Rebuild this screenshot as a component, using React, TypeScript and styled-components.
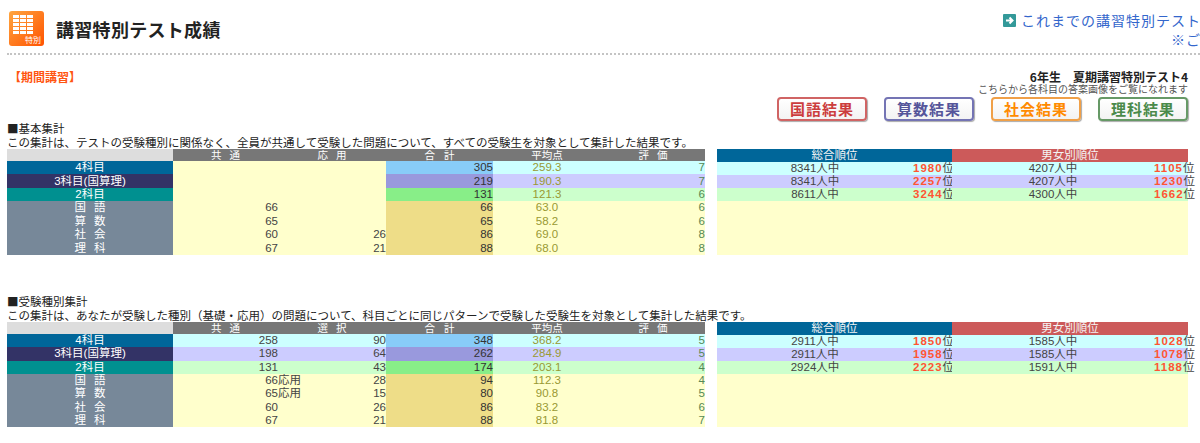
import React from "react";
import styled, { createGlobalStyle } from "styled-components";

const GlobalStyle = createGlobalStyle`
  body {
    margin: 0;
    overflow: hidden;
    background: #fff;
    font-family: "Noto Sans CJK JP", "Noto Sans", sans-serif;
    color: #333;
  }
`;

const tableFont = `"Liberation Sans", "Noto Sans CJK JP", sans-serif`;

type Kind = "k4" | "k3" | "k2" | "sub";

const palette: Record<Kind, { label: string; bg: string; total: string }> = {
  k4: { label: "#006699", bg: "#ccffff", total: "#88ccf8" },
  k3: { label: "#333366", bg: "#ccccff", total: "#9999dd" },
  k2: { label: "#009090", bg: "#ccffcc", total: "#88ee88" },
  sub: { label: "#778899", bg: "#ffffcc", total: "#eedd88" },
};

const Page = styled.div`
  padding: 0 12px 0 7px;
`;

const Header = styled.div`
  display: flex;
  align-items: flex-start;
  height: 42px;
  padding-top: 11px;
`;

const TitleBox = styled.div`
  display: flex;
  align-items: center;
  gap: 12px;
  padding-left: 2px;
`;

const Title = styled.h1`
  margin: 0;
  font-size: 18px;
  font-weight: bold;
  color: #222;
  letter-spacing: 0.3px;
`;

const HeaderLinks = styled.div`
  margin-left: auto;
  margin-right: -73px;
  display: flex;
  flex-direction: column;
  align-items: flex-end;
  white-space: nowrap;
  font-size: 14px;
  line-height: 19px;
  letter-spacing: 1px;
  color: #3366cc;
`;

const LinkLine = styled.a`
  display: flex;
  align-items: center;
  gap: 5px;
  color: #3366cc;
  text-decoration: none;
`;

const DashedRule = styled.div`
  border-top: 2px dotted #c4c4c4;
  margin-right: -12px;
`;

const InfoRow = styled.div`
  display: flex;
  justify-content: space-between;
  align-items: flex-start;
  margin-top: 15px;
  padding-left: 2px;
`;

const Term = styled.div`
  font-size: 12px;
  line-height: 13px;
  font-weight: bold;
  color: #ff5511;
`;

const TestInfo = styled.div`
  display: flex;
  flex-direction: column;
  align-items: flex-end;
`;

const TestName = styled.div`
  font-size: 12px;
  line-height: 13px;
  font-weight: bold;
  color: #222;
  white-space: pre;
`;

const Note = styled.div`
  font-size: 10px;
  line-height: 12px;
  color: #555;
`;

const ButtonRow = styled.div`
  display: flex;
  justify-content: flex-end;
  gap: 17px;
  margin-top: 2px;
`;

const ResultButton = styled.button<{ $color: string; $text: string }>`
  width: 90px;
  height: 24px;
  padding: 0;
  border: 2px solid ${(p) => p.$color};
  border-radius: 4px;
  background: linear-gradient(#ffffff, #f3f3f3);
  box-shadow: 1px 1px 1px #aaa;
  font-family: "Noto Sans CJK JP", sans-serif;
  font-size: 15px;
  font-weight: bold;
  line-height: 18px;
  letter-spacing: 1px;
  color: ${(p) => p.$text};
  cursor: pointer;
`;

const Section = styled.section<{ $gap: number }>`
  margin-top: ${(p) => p.$gap}px;
`;

const SectionTitle = styled.div`
  font-size: 11.5px;
  line-height: 14px;
  color: #222;
`;

const Desc = styled.div`
  font-size: 11.5px;
  line-height: 14px;
  color: #222;
  white-space: nowrap;
`;

const TableRow = styled.div`
  display: flex;
  align-items: stretch;
  gap: 12px;
`;

const ScoreTable = styled.table`
  width: 698px;
  table-layout: fixed;
  border-collapse: collapse;
  border-spacing: 0;
  font-family: ${tableFont};
  font-size: 11.5px;
`;

const HeadCell = styled.th<{ $blank?: boolean }>`
  height: 12px;
  padding: 0;
  font-size: 10.5px;
  line-height: 12px;
  font-weight: normal;
  color: #fff;
  background: ${(p) => (p.$blank ? "#dddddd" : "#777777")};
  text-align: center;
`;

const Spaced = styled.span<{ $gap: number }>`
  letter-spacing: ${(p) => p.$gap}px;
  padding-left: ${(p) => p.$gap}px;
`;

const DataRow = styled.tr`
  height: 13.4px;
`;

const LabelCell = styled.td<{ $kind: Kind }>`
  padding: 0;
  line-height: 13px;
  text-align: center;
  color: #fff;
  background: ${(p) => palette[p.$kind].label};
`;

const NumCell = styled.td<{ $bg: string; $color?: string; $align?: string }>`
  padding: 0;
  line-height: 13px;
  text-align: ${(p) => p.$align ?? "right"};
  background: ${(p) => p.$bg};
  color: ${(p) => p.$color ?? "#444"};
`;

const SplitValue = styled.div`
  display: flex;
  justify-content: space-between;
`;

const RankPanel = styled.div`
  width: 471px;
  display: grid;
  grid-template-columns: 196px 39px 202px 34px;
  grid-template-rows: 13px 13px 13px 13px 1fr;
  font-family: ${tableFont};
  font-size: 11.5px;
`;

const RankHead = styled.div<{ $bg: string }>`
  grid-column: span 2;
  background: ${(p) => p.$bg};
  color: #f4f4f4;
  text-align: center;
  font-size: 11.5px;
  line-height: 13px;
`;

const RankCount = styled.div<{ $bg: string }>`
  background: ${(p) => p.$bg};
  text-align: center;
  line-height: 13px;
  color: #444;
`;

const RankPlace = styled.div<{ $bg: string }>`
  background: ${(p) => p.$bg};
  text-align: right;
  line-height: 13px;
  white-space: nowrap;
  color: #444;
`;

const RankNum = styled.span`
  color: #ff5533;
  font-weight: bold;
  letter-spacing: 1px;
`;

const RankFiller = styled.div`
  grid-column: 1 / -1;
  background: #ffffcc;
`;

const Logo = () => (
  <svg width="35" height="35" viewBox="0 0 35 35">
    <defs>
      <linearGradient id="lg" x1="0" y1="0" x2="1" y2="1">
        <stop offset="0" stopColor="#ffa640" />
        <stop offset="1" stopColor="#ff5200" />
      </linearGradient>
    </defs>
    <rect x="0" y="0" width="35" height="35" rx="3" fill="url(#lg)" />
    {[0, 1, 2, 3, 4].map((r) =>
      [0, 1, 2].map((c) => (
        <rect
          key={`${r}-${c}`}
          x={4 + c * 7}
          y={4 + r * 4}
          width="6"
          height="3"
          fill="#fff"
        />
      ))
    )}
    <text x="32" y="32" fontSize="8" fill="#fff" textAnchor="end" fontFamily="Noto Sans CJK JP">
      特別
    </text>
  </svg>
);

const ArrowIcon = () => (
  <svg width="13" height="13" viewBox="0 0 13 13">
    <rect width="13" height="13" rx="1" fill="#339999" />
    <path d="M3 6.5h6M6.5 3.5l3 3-3 3" stroke="#fff" strokeWidth="2" fill="none" />
  </svg>
);

type ScoreRow = {
  kind: Kind;
  label: string;
  common: string;
  mark?: string;
  extra: string;
  total: string;
  avg: string;
  grade: string;
};

type RankRow = { kind: Kind; n1: string; r1: string; n2: string; r2: string };

const subjectLabel = (label: string) =>
  label.length === 2 ? <Spaced $gap={8}>{label}</Spaced> : label;

const Scores = ({
  rows,
  extraHead,
  plainTop,
}: {
  rows: ScoreRow[];
  extraHead: string;
  plainTop?: boolean;
}) => (
  <ScoreTable>
    <colgroup>
      <col style={{ width: 166 }} />
      <col style={{ width: 105 }} />
      <col style={{ width: 108 }} />
      <col style={{ width: 107 }} />
      <col style={{ width: 108 }} />
      <col style={{ width: 104 }} />
    </colgroup>
    <thead>
      <tr>
        <HeadCell $blank />
        <HeadCell><Spaced $gap={8}>共通</Spaced></HeadCell>
        <HeadCell><Spaced $gap={8}>{extraHead}</Spaced></HeadCell>
        <HeadCell><Spaced $gap={9}>合計</Spaced></HeadCell>
        <HeadCell>平均点</HeadCell>
        <HeadCell><Spaced $gap={8}>評価</Spaced></HeadCell>
      </tr>
    </thead>
    <tbody>
      {rows.map((r) => {
        const c = palette[r.kind];
        const pre = plainTop && r.kind !== "sub" ? "#ffffcc" : c.bg;
        return (
          <DataRow key={r.label}>
            <LabelCell $kind={r.kind}>
              {r.kind === "sub" ? subjectLabel(r.label) : r.label}
            </LabelCell>
            <NumCell $bg={pre}>{r.common}</NumCell>
            <NumCell $bg={pre}>
              <SplitValue>
                <span>{r.mark ?? ""}</span>
                <span>{r.extra}</span>
              </SplitValue>
            </NumCell>
            <NumCell $bg={c.total} $color="#333">{r.total}</NumCell>
            <NumCell $bg={c.bg} $color="#999933" $align="center">{r.avg}</NumCell>
            <NumCell $bg={c.bg} $color="#558855">{r.grade}</NumCell>
          </DataRow>
        );
      })}
    </tbody>
  </ScoreTable>
);

const Ranks = ({ rows }: { rows: RankRow[] }) => (
  <RankPanel>
    <RankHead $bg="#006699">総合順位</RankHead>
    <RankHead $bg="#cc5a5a">男女別順位</RankHead>
    {rows.map((r) => {
      const bg = palette[r.kind].bg;
      return (
        <React.Fragment key={r.kind}>
          <RankCount $bg={bg}>{r.n1}人中</RankCount>
          <RankPlace $bg={bg}><RankNum>{r.r1}</RankNum>位</RankPlace>
          <RankCount $bg={bg}>{r.n2}人中</RankCount>
          <RankPlace $bg={bg}><RankNum>{r.r2}</RankNum>位</RankPlace>
        </React.Fragment>
      );
    })}
    <RankFiller />
  </RankPanel>
);

const basicRows: ScoreRow[] = [
  { kind: "k4", label: "4科目", common: "", extra: "", total: "305", avg: "259.3", grade: "7" },
  { kind: "k3", label: "3科目(国算理)", common: "", extra: "", total: "219", avg: "190.3", grade: "7" },
  { kind: "k2", label: "2科目", common: "", extra: "", total: "131", avg: "121.3", grade: "6" },
  { kind: "sub", label: "国語", common: "66", extra: "", total: "66", avg: "63.0", grade: "6" },
  { kind: "sub", label: "算数", common: "65", extra: "", total: "65", avg: "58.2", grade: "6" },
  { kind: "sub", label: "社会", common: "60", extra: "26", total: "86", avg: "69.0", grade: "8" },
  { kind: "sub", label: "理科", common: "67", extra: "21", total: "88", avg: "68.0", grade: "8" },
];

const typeRows: ScoreRow[] = [
  { kind: "k4", label: "4科目", common: "258", extra: "90", total: "348", avg: "368.2", grade: "5" },
  { kind: "k3", label: "3科目(国算理)", common: "198", extra: "64", total: "262", avg: "284.9", grade: "5" },
  { kind: "k2", label: "2科目", common: "131", extra: "43", total: "174", avg: "203.1", grade: "4" },
  { kind: "sub", label: "国語", common: "66", mark: "応用", extra: "28", total: "94", avg: "112.3", grade: "4" },
  { kind: "sub", label: "算数", common: "65", mark: "応用", extra: "15", total: "80", avg: "90.8", grade: "5" },
  { kind: "sub", label: "社会", common: "60", extra: "26", total: "86", avg: "83.2", grade: "6" },
  { kind: "sub", label: "理科", common: "67", extra: "21", total: "88", avg: "81.8", grade: "7" },
];

const basicRanks: RankRow[] = [
  { kind: "k4", n1: "8341", r1: "1980", n2: "4207", r2: "1105" },
  { kind: "k3", n1: "8341", r1: "2257", n2: "4207", r2: "1230" },
  { kind: "k2", n1: "8611", r1: "3244", n2: "4300", r2: "1662" },
];

const typeRanks: RankRow[] = [
  { kind: "k4", n1: "2911", r1: "1850", n2: "1585", r2: "1028" },
  { kind: "k3", n1: "2911", r1: "1958", n2: "1585", r2: "1078" },
  { kind: "k2", n1: "2924", r1: "2223", n2: "1591", r2: "1188" },
];

const buttons = [
  { label: "国語結果", border: "#d06464", text: "#cc3d3d" },
  { label: "算数結果", border: "#7474b4", text: "#55559a" },
  { label: "社会結果", border: "#f0a048", text: "#ff8a00" },
  { label: "理科結果", border: "#669966", text: "#4a8a4a" },
];

const App: React.FC = () => (
  <Page>
    <GlobalStyle />
    <Header>
      <TitleBox>
        <Logo />
        <Title>講習特別テスト成績</Title>
      </TitleBox>
      <HeaderLinks>
        <LinkLine href="#">
          <ArrowIcon />
          これまでの講習特別テスト成績一覧
        </LinkLine>
        <span>※ご利用方法</span>
      </HeaderLinks>
    </Header>
    <DashedRule />
    <InfoRow>
      <Term>【期間講習】</Term>
      <TestInfo>
        <TestName>6年生　夏期講習特別テスト4</TestName>
        <Note>こちらから各科目の答案画像をご覧になれます</Note>
      </TestInfo>
    </InfoRow>
    <ButtonRow>
      {buttons.map((b) => (
        <ResultButton key={b.label} $color={b.border} $text={b.text}>
          {b.label}
        </ResultButton>
      ))}
    </ButtonRow>
    <Section $gap={0}>
      <SectionTitle>■基本集計</SectionTitle>
      <Desc>
        この集計は、テストの受験種別に関係なく、全員が共通して受験した問題について、すべての受験生を対象として集計した結果です。
      </Desc>
      <TableRow>
        <Scores rows={basicRows} extraHead="応用" plainTop />
        <Ranks rows={basicRanks} />
      </TableRow>
    </Section>
    <Section $gap={39}>
      <SectionTitle>■受験種別集計</SectionTitle>
      <Desc>
        この集計は、あなたが受験した種別（基礎・応用）の問題について、科目ごとに同じパターンで受験した受験生を対象として集計した結果です。
      </Desc>
      <TableRow>
        <Scores rows={typeRows} extraHead="選択" />
        <Ranks rows={typeRanks} />
      </TableRow>
    </Section>
  </Page>
);

export default App;
